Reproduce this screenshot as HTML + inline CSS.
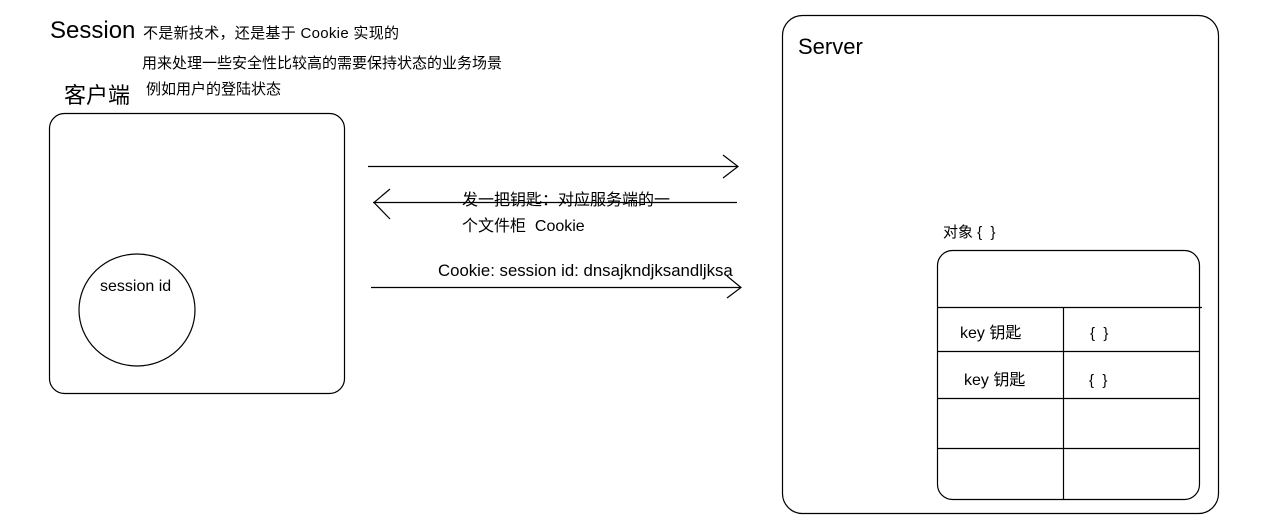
<!DOCTYPE html>
<html><head><meta charset="utf-8"><style>
html,body{margin:0;padding:0;background:#fff;width:1276px;height:532px;overflow:hidden}
svg text{font-family:"Liberation Sans","Noto Sans CJK SC",sans-serif;fill:#000}
</style></head><body>
<svg width="1276" height="532" viewBox="0 0 1276 532" xmlns="http://www.w3.org/2000/svg">
<g fill="none" stroke="#000" stroke-width="1.2">
<rect x="49.5" y="113.5" width="295" height="280" rx="15"/>
<ellipse cx="137" cy="310" rx="58" ry="56"/>
<rect x="782.5" y="15.5" width="436" height="498" rx="20"/>
<rect x="937.5" y="250.5" width="262" height="249" rx="15"/>
<path d="M937 307.5H1202M937 351.5H1199M937 398.5H1199M937 448.5H1199M1063.5 307V499"/>
<path d="M368 166.5H738M723 155L738 166.5L723 178"/>
<path d="M373 202.5H737M390 189L374 202.5L390 219"/>
<path d="M371 287.5H741M727 276L741 287.5L727 298"/>
</g>
<text x="50" y="38" font-size="24">Session</text>
<text x="143" y="38" font-size="15" letter-spacing="0.3">不是新技术，还是基于 Cookie 实现的</text>
<text x="142" y="68" font-size="15">用来处理一些安全性比较高的需要保持状态的业务场景</text>
<text x="64" y="103" font-size="22">客户端</text>
<text x="146" y="94" font-size="15">例如用户的登陆状态</text>
<text x="100" y="291" font-size="16">session id</text>
<text x="798" y="54" font-size="22">Server</text>
<text x="462" y="205" font-size="16">发一把钥匙：对应服务端的一</text>
<text x="462" y="231" font-size="16">个文件柜&#160;&#160;Cookie</text>
<text x="438" y="276" font-size="16.8">Cookie: session id: dnsajkndjksandljksa</text>
<text x="943" y="237" font-size="15">对象 {&#160;&#160;}</text>
<text x="960" y="338" font-size="16">key 钥匙</text>
<text x="964" y="385" font-size="16">key 钥匙</text>
<text x="1090" y="338" font-size="15">{&#160;&#160;}</text>
<text x="1089" y="385" font-size="15">{&#160;&#160;}</text>
</svg>
</body></html>
